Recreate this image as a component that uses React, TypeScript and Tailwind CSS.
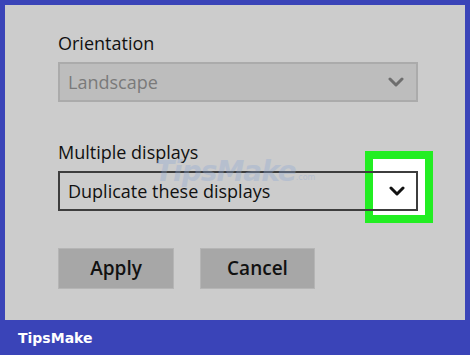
function Chevron({ className }: { className: string }) {
  return (
    <svg width="16" height="10" viewBox="0 0 16 10" className={className}>
      <path d="M2 2 L8 8 L14 2" fill="none" stroke="currentColor" strokeWidth="3" strokeLinecap="round" strokeLinejoin="round" />
    </svg>
  );
}

export default function App() {
  return (
    <div className="w-[470px] h-[355px] bg-[#3a44b8] flex flex-col font-['Open_Sans',sans-serif] overflow-hidden">
      <div className="relative mx-[5px] mt-[5px] h-[315px] bg-[#cccccc] pl-[53px] pt-[26px]">
        <div className="text-[18px] leading-[24px] text-[#111]">Orientation</div>
        <div className="mt-[7px] w-[360px] h-[40px] bg-[#bdbdbd] border-2 border-[#ababab] flex items-center justify-between pl-[8px] pr-[12px]">
          <span className="text-[18px] text-[#7a7a7a]">Landscape</span>
          <Chevron className="text-[#6e6e6e]" />
        </div>

        <div className="mt-[38px] text-[18px] leading-[24px] text-[#111]">Multiple displays</div>
        <div className="relative mt-[7px] w-[360px] h-[40px]">
          {/* green highlight behind the select frame */}
          <div className="absolute left-[307px] top-[-20px] w-[68px] h-[72px] border-[8px] border-[#22ee22] bg-white" />
          <div className="relative h-full border-2 border-[#3d3d3d] flex items-center justify-between pl-[8px] pr-[11px]">
            <span className="text-[18px] text-[#111]">Duplicate these displays</span>
            <Chevron className="text-[#111]" />
          </div>
          {/* watermark */}
          <div className="absolute left-[97px] top-[-14px] flex items-end pointer-events-none opacity-35">
            <span className="font-['DejaVu_Sans',sans-serif] font-bold italic text-[28px] leading-[30px] text-[#8fa8d4] tracking-[-1px]">TipsMake</span>
            <span className="font-['DejaVu_Sans',sans-serif] text-[8px] text-[#8fa8d4] mb-[3px]">.com</span>
          </div>
        </div>

        <div className="mt-[37px] flex gap-[26px]">
          <button className="w-[116px] h-[41px] bg-[#a7a7a7] border border-[#b5b5b5] text-[19px] font-semibold text-[#111]">Apply</button>
          <button className="w-[115px] h-[41px] bg-[#a7a7a7] border border-[#b5b5b5] text-[19px] font-semibold text-[#111]">Cancel</button>
        </div>
      </div>
      <div className="flex-1 flex items-center pl-[18px] pt-[2px]">
        <span className="font-['DejaVu_Sans',sans-serif] font-bold text-[14px] text-white">TipsMake</span>
      </div>
    </div>
  );
}
